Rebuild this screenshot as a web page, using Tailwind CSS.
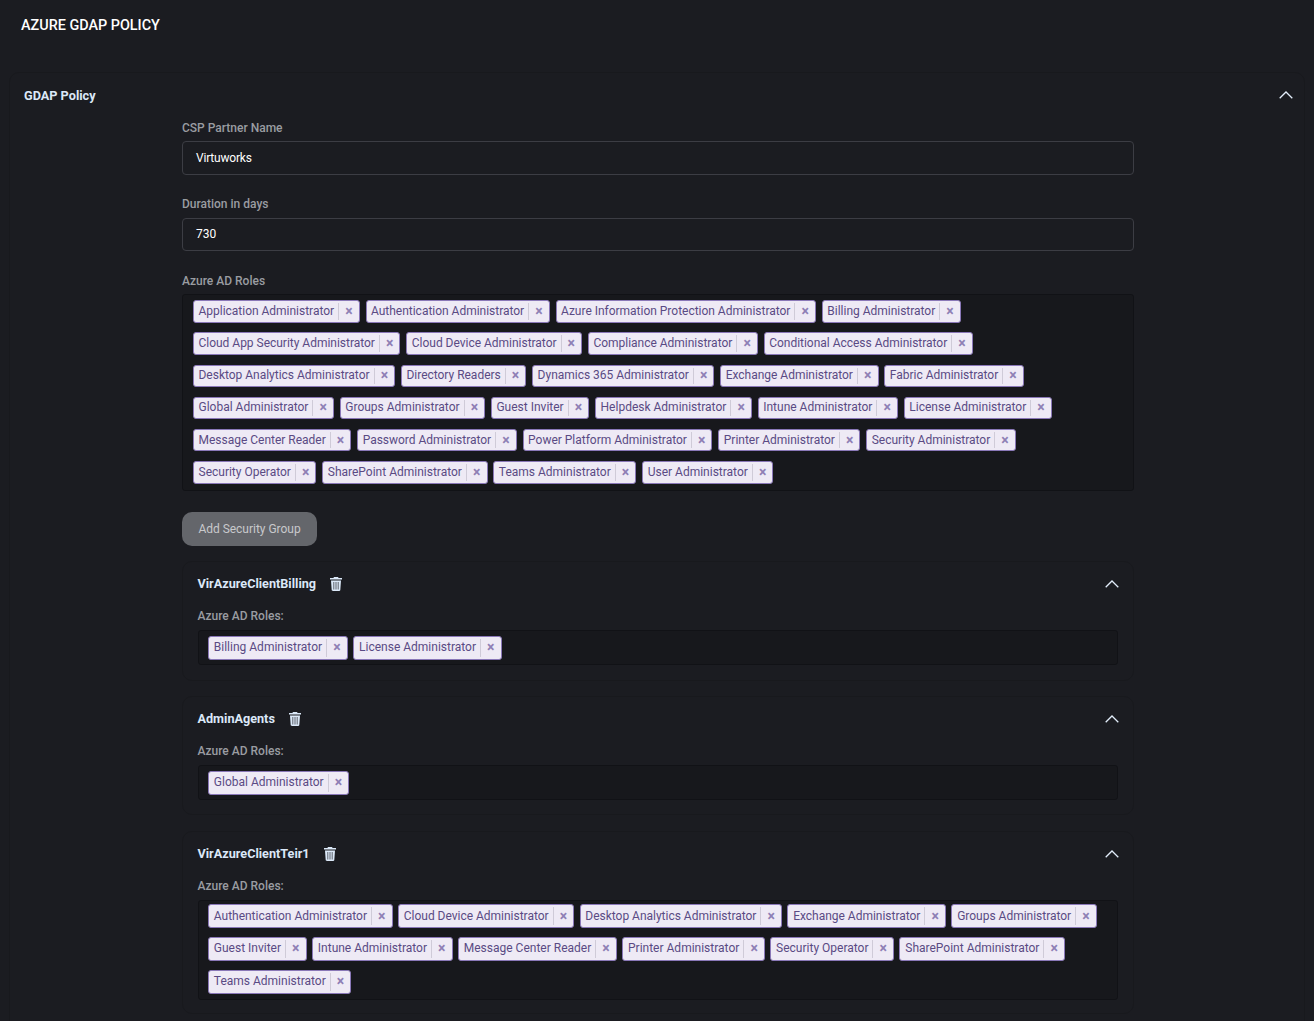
<!DOCTYPE html>
<html><head><meta charset="utf-8"><script src="https://cdn.jsdelivr.net/npm/@tailwindcss/browser@4"></script></head>
<body class="bg-[#1b1c21] font-['Roboto',sans-serif] overflow-hidden h-[1021px]">
<h1 class="pl-[21px] pt-[17px] h-[72px] text-[14.4px] leading-[18px] font-medium text-white">AZURE GDAP POLICY</h1>
<section class="mx-[9px] border border-[#18191d] rounded-t-[10px] h-[960px]">
  <div class="flex justify-between items-center pl-[14px] pr-[11px] h-[45px]">
    <span class="text-[12.7px] font-bold text-[#dbe8f8] leading-[18px]">GDAP Policy</span>
    <svg class="w-[14px] h-[8px] mb-[1px]" viewBox="0 0 14 8" fill="none" stroke="#e3eefb" stroke-width="1.3"><path d="M.7 7.2 7 1l6.3 6.2"/></svg>
  </div>
  <div class="ml-[172px] w-[952px]">
    <label class="block text-[12px] font-medium text-[#9a9ca1] leading-[16px] mt-[2px]">CSP Partner Name</label>
    <div class="mt-[5px] h-[34px] border border-[#3c3d44] rounded-[4px] pl-[13px] flex items-center text-[12px] tracking-[-0.2px] text-white">Virtuworks</div>
    <label class="block text-[12px] font-medium text-[#9a9ca1] leading-[16px] mt-[21px]">Duration in days</label>
    <div class="mt-[6px] h-[33px] border border-[#3c3d44] rounded-[4px] pl-[13px] pb-[1px] flex items-center text-[12px] text-white">730</div>
    <label class="block text-[12px] font-medium text-[#9a9ca1] leading-[16px] mt-[22px]">Azure AD Roles</label>
    <div class="mt-[5px] h-[197px] bg-[#17181c] border border-[#111216] rounded-[3px] pl-[10px] pt-[5.200px] flex flex-col gap-y-[9.8px] text-[12px] text-[#5a4a84]">
      <div class="flex gap-x-[5.8px] tracking-[-0.017px]">
        <span class="h-[22.4px] flex items-center bg-[#eeeaf5] border border-[#8a78b8] rounded-[3px]"><span class="pl-[4.500px] pr-[4px] pb-[1px]">Application Administrator</span><span class="w-[20.600px] self-stretch my-[2px] border-l border-[#cfcbd8] flex items-center justify-center text-[14px] font-bold text-[#8f80b5]">×</span></span>
        <span class="h-[22.4px] flex items-center bg-[#eeeaf5] border border-[#8a78b8] rounded-[3px]"><span class="pl-[4.500px] pr-[4px] pb-[1px]">Authentication Administrator</span><span class="w-[20.600px] self-stretch my-[2px] border-l border-[#cfcbd8] flex items-center justify-center text-[14px] font-bold text-[#8f80b5]">×</span></span>
        <span class="h-[22.4px] flex items-center bg-[#eeeaf5] border border-[#8a78b8] rounded-[3px]"><span class="pl-[4.500px] pr-[4px] pb-[1px]">Azure Information Protection Administrator</span><span class="w-[20.600px] self-stretch my-[2px] border-l border-[#cfcbd8] flex items-center justify-center text-[14px] font-bold text-[#8f80b5]">×</span></span>
        <span class="h-[22.4px] flex items-center bg-[#eeeaf5] border border-[#8a78b8] rounded-[3px]"><span class="pl-[4.500px] pr-[4px] pb-[1px]">Billing Administrator</span><span class="w-[20.600px] self-stretch my-[2px] border-l border-[#cfcbd8] flex items-center justify-center text-[14px] font-bold text-[#8f80b5]">×</span></span>
      </div>
      <div class="flex gap-x-[5.8px] tracking-[-0.018px]">
        <span class="h-[22.4px] flex items-center bg-[#eeeaf5] border border-[#8a78b8] rounded-[3px]"><span class="pl-[4.500px] pr-[4px] pb-[1px]">Cloud App Security Administrator</span><span class="w-[20.600px] self-stretch my-[2px] border-l border-[#cfcbd8] flex items-center justify-center text-[14px] font-bold text-[#8f80b5]">×</span></span>
        <span class="h-[22.4px] flex items-center bg-[#eeeaf5] border border-[#8a78b8] rounded-[3px]"><span class="pl-[4.500px] pr-[4px] pb-[1px]">Cloud Device Administrator</span><span class="w-[20.600px] self-stretch my-[2px] border-l border-[#cfcbd8] flex items-center justify-center text-[14px] font-bold text-[#8f80b5]">×</span></span>
        <span class="h-[22.4px] flex items-center bg-[#eeeaf5] border border-[#8a78b8] rounded-[3px]"><span class="pl-[4.500px] pr-[4px] pb-[1px]">Compliance Administrator</span><span class="w-[20.600px] self-stretch my-[2px] border-l border-[#cfcbd8] flex items-center justify-center text-[14px] font-bold text-[#8f80b5]">×</span></span>
        <span class="h-[22.4px] flex items-center bg-[#eeeaf5] border border-[#8a78b8] rounded-[3px]"><span class="pl-[4.500px] pr-[4px] pb-[1px]">Conditional Access Administrator</span><span class="w-[20.600px] self-stretch my-[2px] border-l border-[#cfcbd8] flex items-center justify-center text-[14px] font-bold text-[#8f80b5]">×</span></span>
      </div>
      <div class="flex gap-x-[5.8px] tracking-[-0.016px]">
        <span class="h-[22.4px] flex items-center bg-[#eeeaf5] border border-[#8a78b8] rounded-[3px]"><span class="pl-[4.500px] pr-[4px] pb-[1px]">Desktop Analytics Administrator</span><span class="w-[20.600px] self-stretch my-[2px] border-l border-[#cfcbd8] flex items-center justify-center text-[14px] font-bold text-[#8f80b5]">×</span></span>
        <span class="h-[22.4px] flex items-center bg-[#eeeaf5] border border-[#8a78b8] rounded-[3px]"><span class="pl-[4.500px] pr-[4px] pb-[1px]">Directory Readers</span><span class="w-[20.600px] self-stretch my-[2px] border-l border-[#cfcbd8] flex items-center justify-center text-[14px] font-bold text-[#8f80b5]">×</span></span>
        <span class="h-[22.4px] flex items-center bg-[#eeeaf5] border border-[#8a78b8] rounded-[3px]"><span class="pl-[4.500px] pr-[4px] pb-[1px]">Dynamics 365 Administrator</span><span class="w-[20.600px] self-stretch my-[2px] border-l border-[#cfcbd8] flex items-center justify-center text-[14px] font-bold text-[#8f80b5]">×</span></span>
        <span class="h-[22.4px] flex items-center bg-[#eeeaf5] border border-[#8a78b8] rounded-[3px]"><span class="pl-[4.500px] pr-[4px] pb-[1px]">Exchange Administrator</span><span class="w-[20.600px] self-stretch my-[2px] border-l border-[#cfcbd8] flex items-center justify-center text-[14px] font-bold text-[#8f80b5]">×</span></span>
        <span class="h-[22.4px] flex items-center bg-[#eeeaf5] border border-[#8a78b8] rounded-[3px]"><span class="pl-[4.500px] pr-[4px] pb-[1px]">Fabric Administrator</span><span class="w-[20.600px] self-stretch my-[2px] border-l border-[#cfcbd8] flex items-center justify-center text-[14px] font-bold text-[#8f80b5]">×</span></span>
      </div>
      <div class="flex gap-x-[5.8px]">
        <span class="h-[22.4px] flex items-center bg-[#eeeaf5] border border-[#8a78b8] rounded-[3px]"><span class="pl-[4.500px] pr-[4px] pb-[1px]">Global Administrator</span><span class="w-[20.600px] self-stretch my-[2px] border-l border-[#cfcbd8] flex items-center justify-center text-[14px] font-bold text-[#8f80b5]">×</span></span>
        <span class="h-[22.4px] flex items-center bg-[#eeeaf5] border border-[#8a78b8] rounded-[3px]"><span class="pl-[4.500px] pr-[4px] pb-[1px]">Groups Administrator</span><span class="w-[20.600px] self-stretch my-[2px] border-l border-[#cfcbd8] flex items-center justify-center text-[14px] font-bold text-[#8f80b5]">×</span></span>
        <span class="h-[22.4px] flex items-center bg-[#eeeaf5] border border-[#8a78b8] rounded-[3px]"><span class="pl-[4.500px] pr-[4px] pb-[1px]">Guest Inviter</span><span class="w-[20.600px] self-stretch my-[2px] border-l border-[#cfcbd8] flex items-center justify-center text-[14px] font-bold text-[#8f80b5]">×</span></span>
        <span class="h-[22.4px] flex items-center bg-[#eeeaf5] border border-[#8a78b8] rounded-[3px]"><span class="pl-[4.500px] pr-[4px] pb-[1px]">Helpdesk Administrator</span><span class="w-[20.600px] self-stretch my-[2px] border-l border-[#cfcbd8] flex items-center justify-center text-[14px] font-bold text-[#8f80b5]">×</span></span>
        <span class="h-[22.4px] flex items-center bg-[#eeeaf5] border border-[#8a78b8] rounded-[3px]"><span class="pl-[4.500px] pr-[4px] pb-[1px]">Intune Administrator</span><span class="w-[20.600px] self-stretch my-[2px] border-l border-[#cfcbd8] flex items-center justify-center text-[14px] font-bold text-[#8f80b5]">×</span></span>
        <span class="h-[22.4px] flex items-center bg-[#eeeaf5] border border-[#8a78b8] rounded-[3px]"><span class="pl-[4.500px] pr-[4px] pb-[1px]">License Administrator</span><span class="w-[20.600px] self-stretch my-[2px] border-l border-[#cfcbd8] flex items-center justify-center text-[14px] font-bold text-[#8f80b5]">×</span></span>
      </div>
      <div class="flex gap-x-[5.8px] tracking-[-0.01px]">
        <span class="h-[22.4px] flex items-center bg-[#eeeaf5] border border-[#8a78b8] rounded-[3px]"><span class="pl-[4.500px] pr-[4px] pb-[1px]">Message Center Reader</span><span class="w-[20.600px] self-stretch my-[2px] border-l border-[#cfcbd8] flex items-center justify-center text-[14px] font-bold text-[#8f80b5]">×</span></span>
        <span class="h-[22.4px] flex items-center bg-[#eeeaf5] border border-[#8a78b8] rounded-[3px]"><span class="pl-[4.500px] pr-[4px] pb-[1px]">Password Administrator</span><span class="w-[20.600px] self-stretch my-[2px] border-l border-[#cfcbd8] flex items-center justify-center text-[14px] font-bold text-[#8f80b5]">×</span></span>
        <span class="h-[22.4px] flex items-center bg-[#eeeaf5] border border-[#8a78b8] rounded-[3px]"><span class="pl-[4.500px] pr-[4px] pb-[1px]">Power Platform Administrator</span><span class="w-[20.600px] self-stretch my-[2px] border-l border-[#cfcbd8] flex items-center justify-center text-[14px] font-bold text-[#8f80b5]">×</span></span>
        <span class="h-[22.4px] flex items-center bg-[#eeeaf5] border border-[#8a78b8] rounded-[3px]"><span class="pl-[4.500px] pr-[4px] pb-[1px]">Printer Administrator</span><span class="w-[20.600px] self-stretch my-[2px] border-l border-[#cfcbd8] flex items-center justify-center text-[14px] font-bold text-[#8f80b5]">×</span></span>
        <span class="h-[22.4px] flex items-center bg-[#eeeaf5] border border-[#8a78b8] rounded-[3px]"><span class="pl-[4.500px] pr-[4px] pb-[1px]">Security Administrator</span><span class="w-[20.600px] self-stretch my-[2px] border-l border-[#cfcbd8] flex items-center justify-center text-[14px] font-bold text-[#8f80b5]">×</span></span>
      </div>
      <div class="flex gap-x-[5.8px]">
        <span class="h-[22.4px] flex items-center bg-[#eeeaf5] border border-[#8a78b8] rounded-[3px]"><span class="pl-[4.500px] pr-[4px] pb-[1px]">Security Operator</span><span class="w-[20.600px] self-stretch my-[2px] border-l border-[#cfcbd8] flex items-center justify-center text-[14px] font-bold text-[#8f80b5]">×</span></span>
        <span class="h-[22.4px] flex items-center bg-[#eeeaf5] border border-[#8a78b8] rounded-[3px]"><span class="pl-[4.500px] pr-[4px] pb-[1px]">SharePoint Administrator</span><span class="w-[20.600px] self-stretch my-[2px] border-l border-[#cfcbd8] flex items-center justify-center text-[14px] font-bold text-[#8f80b5]">×</span></span>
        <span class="h-[22.4px] flex items-center bg-[#eeeaf5] border border-[#8a78b8] rounded-[3px]"><span class="pl-[4.500px] pr-[4px] pb-[1px]">Teams Administrator</span><span class="w-[20.600px] self-stretch my-[2px] border-l border-[#cfcbd8] flex items-center justify-center text-[14px] font-bold text-[#8f80b5]">×</span></span>
        <span class="h-[22.4px] flex items-center bg-[#eeeaf5] border border-[#8a78b8] rounded-[3px]"><span class="pl-[4.500px] pr-[4px] pb-[1px]">User Administrator</span><span class="w-[20.600px] self-stretch my-[2px] border-l border-[#cfcbd8] flex items-center justify-center text-[14px] font-bold text-[#8f80b5]">×</span></span>
      </div>
    </div>
    <button class="block mt-[21px] w-[135px] h-[34px] pb-[1px] rounded-[10px] bg-[#64666b] text-[12px] tracking-[-0.02px] text-[#c8c9cb]">Add Security Group</button>

    <div class="mt-[15px] h-[120px] border border-[#18191d] rounded-[10px] px-[15px]">
      <div class="flex items-center h-[43px] pt-[1px]">
        <span class="-ml-[0.500px] text-[12.65px] font-bold text-[#dbe8f8]">VirAzureClientBilling</span>
        <svg class="ml-[14px] w-[12px] h-[14px]" viewBox="0 0 12 14"><path fill="#dbe8f8" d="M4 0h4l.6 1H12v1.500H0V1h3.400zM1 3.500h10l-.7 9.600c0 .5-.5.9-1 .9H2.700c-.5 0-1-.4-1-.9z"/><path stroke="#5f636b" d="M3.800 5v7.500M6 5v7.500M8.200 5v7.500"/></svg>
        <svg class="ml-auto -mr-[1px] mb-[1px] w-[14px] h-[8px]" viewBox="0 0 14 8" fill="none" stroke="#e3eefb" stroke-width="1.3"><path d="M.7 7.2 7 1l6.3 6.2"/></svg>
      </div>
      <div class="-ml-[0.500px] text-[12px] font-medium text-[#9a9ca1] leading-[16px] mt-[3px]">Azure AD Roles:</div>
      <div class="mt-[6px] h-[35px] bg-[#17181c] border border-[#111216] rounded-[3px] pl-[9px] pt-[4.500px] flex gap-x-[5.6px] text-[12px] text-[#5a4a84]">
        <span class="h-[24px] flex items-center bg-[#eeeaf5] border border-[#8a78b8] rounded-[3px]"><span class="pl-[4.800px] pr-[4px] pb-[1px]">Billing Administrator</span><span class="w-[20.600px] self-stretch my-[2px] border-l border-[#cfcbd8] flex items-center justify-center text-[14px] font-bold text-[#8f80b5]">×</span></span>
        <span class="h-[24px] flex items-center bg-[#eeeaf5] border border-[#8a78b8] rounded-[3px]"><span class="pl-[4.800px] pr-[4px] pb-[1px]">License Administrator</span><span class="w-[20.600px] self-stretch my-[2px] border-l border-[#cfcbd8] flex items-center justify-center text-[14px] font-bold text-[#8f80b5]">×</span></span>
      </div>
    </div>

    <div class="mt-[15px] h-[119px] border border-[#18191d] rounded-[10px] px-[15px]">
      <div class="flex items-center h-[43px] pt-[1px]">
        <span class="-ml-[0.500px] text-[12.65px] font-bold text-[#dbe8f8]">AdminAgents</span>
        <svg class="ml-[14px] w-[12px] h-[14px]" viewBox="0 0 12 14"><path fill="#dbe8f8" d="M4 0h4l.6 1H12v1.500H0V1h3.400zM1 3.500h10l-.7 9.600c0 .5-.5.9-1 .9H2.700c-.5 0-1-.4-1-.9z"/><path stroke="#5f636b" d="M3.800 5v7.500M6 5v7.500M8.200 5v7.500"/></svg>
        <svg class="ml-auto -mr-[1px] mb-[1px] w-[14px] h-[8px]" viewBox="0 0 14 8" fill="none" stroke="#e3eefb" stroke-width="1.3"><path d="M.7 7.2 7 1l6.3 6.2"/></svg>
      </div>
      <div class="-ml-[0.500px] text-[12px] font-medium text-[#9a9ca1] leading-[16px] mt-[3px]">Azure AD Roles:</div>
      <div class="mt-[6px] h-[35px] bg-[#17181c] border border-[#111216] rounded-[3px] pl-[9px] pt-[4.500px] flex gap-x-[5.6px] text-[12px] text-[#5a4a84]">
        <span class="h-[24px] flex items-center bg-[#eeeaf5] border border-[#8a78b8] rounded-[3px]"><span class="pl-[4.800px] pr-[4px] pb-[1px]">Global Administrator</span><span class="w-[20.600px] self-stretch my-[2px] border-l border-[#cfcbd8] flex items-center justify-center text-[14px] font-bold text-[#8f80b5]">×</span></span>
      </div>
    </div>

    <div class="mt-[16px] h-[183px] border border-[#18191d] rounded-[10px] px-[15px]">
      <div class="flex items-center h-[43px] pt-[1px]">
        <span class="-ml-[0.500px] text-[12.65px] font-bold text-[#dbe8f8]">VirAzureClientTeir1</span>
        <svg class="ml-[14px] w-[12px] h-[14px]" viewBox="0 0 12 14"><path fill="#dbe8f8" d="M4 0h4l.6 1H12v1.500H0V1h3.400zM1 3.500h10l-.7 9.600c0 .5-.5.9-1 .9H2.700c-.5 0-1-.4-1-.9z"/><path stroke="#5f636b" d="M3.800 5v7.500M6 5v7.500M8.200 5v7.500"/></svg>
        <svg class="ml-auto -mr-[1px] mb-[1px] w-[14px] h-[8px]" viewBox="0 0 14 8" fill="none" stroke="#e3eefb" stroke-width="1.3"><path d="M.7 7.2 7 1l6.3 6.2"/></svg>
      </div>
      <div class="-ml-[0.500px] text-[12px] font-medium text-[#9a9ca1] leading-[16px] mt-[3px]">Azure AD Roles:</div>
      <div class="mt-[6px] h-[100px] bg-[#17181c] border border-[#111216] rounded-[3px] pl-[9px] pt-[3px] flex flex-col gap-y-[8.8px] text-[12px] text-[#5a4a84]">
        <div class="flex gap-x-[5.4px] tracking-[-0.016px]">
          <span class="h-[24px] flex items-center bg-[#eeeaf5] border border-[#8a78b8] rounded-[3px]"><span class="pl-[4.800px] pr-[4px] pb-[1px]">Authentication Administrator</span><span class="w-[20.600px] self-stretch my-[2px] border-l border-[#cfcbd8] flex items-center justify-center text-[14px] font-bold text-[#8f80b5]">×</span></span>
          <span class="h-[24px] flex items-center bg-[#eeeaf5] border border-[#8a78b8] rounded-[3px]"><span class="pl-[4.800px] pr-[4px] pb-[1px]">Cloud Device Administrator</span><span class="w-[20.600px] self-stretch my-[2px] border-l border-[#cfcbd8] flex items-center justify-center text-[14px] font-bold text-[#8f80b5]">×</span></span>
          <span class="h-[24px] flex items-center bg-[#eeeaf5] border border-[#8a78b8] rounded-[3px]"><span class="pl-[4.800px] pr-[4px] pb-[1px]">Desktop Analytics Administrator</span><span class="w-[20.600px] self-stretch my-[2px] border-l border-[#cfcbd8] flex items-center justify-center text-[14px] font-bold text-[#8f80b5]">×</span></span>
          <span class="h-[24px] flex items-center bg-[#eeeaf5] border border-[#8a78b8] rounded-[3px]"><span class="pl-[4.800px] pr-[4px] pb-[1px]">Exchange Administrator</span><span class="w-[20.600px] self-stretch my-[2px] border-l border-[#cfcbd8] flex items-center justify-center text-[14px] font-bold text-[#8f80b5]">×</span></span>
          <span class="h-[24px] flex items-center bg-[#eeeaf5] border border-[#8a78b8] rounded-[3px]"><span class="pl-[4.800px] pr-[4px] pb-[1px]">Groups Administrator</span><span class="w-[20.600px] self-stretch my-[2px] border-l border-[#cfcbd8] flex items-center justify-center text-[14px] font-bold text-[#8f80b5]">×</span></span>
        </div>
        <div class="flex gap-x-[5.4px]">
          <span class="h-[24px] flex items-center bg-[#eeeaf5] border border-[#8a78b8] rounded-[3px]"><span class="pl-[4.800px] pr-[4px] pb-[1px]">Guest Inviter</span><span class="w-[20.600px] self-stretch my-[2px] border-l border-[#cfcbd8] flex items-center justify-center text-[14px] font-bold text-[#8f80b5]">×</span></span>
          <span class="h-[24px] flex items-center bg-[#eeeaf5] border border-[#8a78b8] rounded-[3px]"><span class="pl-[4.800px] pr-[4px] pb-[1px]">Intune Administrator</span><span class="w-[20.600px] self-stretch my-[2px] border-l border-[#cfcbd8] flex items-center justify-center text-[14px] font-bold text-[#8f80b5]">×</span></span>
          <span class="h-[24px] flex items-center bg-[#eeeaf5] border border-[#8a78b8] rounded-[3px]"><span class="pl-[4.800px] pr-[4px] pb-[1px]">Message Center Reader</span><span class="w-[20.600px] self-stretch my-[2px] border-l border-[#cfcbd8] flex items-center justify-center text-[14px] font-bold text-[#8f80b5]">×</span></span>
          <span class="h-[24px] flex items-center bg-[#eeeaf5] border border-[#8a78b8] rounded-[3px]"><span class="pl-[4.800px] pr-[4px] pb-[1px]">Printer Administrator</span><span class="w-[20.600px] self-stretch my-[2px] border-l border-[#cfcbd8] flex items-center justify-center text-[14px] font-bold text-[#8f80b5]">×</span></span>
          <span class="h-[24px] flex items-center bg-[#eeeaf5] border border-[#8a78b8] rounded-[3px]"><span class="pl-[4.800px] pr-[4px] pb-[1px]">Security Operator</span><span class="w-[20.600px] self-stretch my-[2px] border-l border-[#cfcbd8] flex items-center justify-center text-[14px] font-bold text-[#8f80b5]">×</span></span>
          <span class="h-[24px] flex items-center bg-[#eeeaf5] border border-[#8a78b8] rounded-[3px]"><span class="pl-[4.800px] pr-[4px] pb-[1px]">SharePoint Administrator</span><span class="w-[20.600px] self-stretch my-[2px] border-l border-[#cfcbd8] flex items-center justify-center text-[14px] font-bold text-[#8f80b5]">×</span></span>
        </div>
        <div class="flex gap-x-[5.4px]">
          <span class="h-[24px] flex items-center bg-[#eeeaf5] border border-[#8a78b8] rounded-[3px]"><span class="pl-[4.800px] pr-[4px] pb-[1px]">Teams Administrator</span><span class="w-[20.600px] self-stretch my-[2px] border-l border-[#cfcbd8] flex items-center justify-center text-[14px] font-bold text-[#8f80b5]">×</span></span>
        </div>
      </div>
    </div>
  </div>
</section>
</body></html>
